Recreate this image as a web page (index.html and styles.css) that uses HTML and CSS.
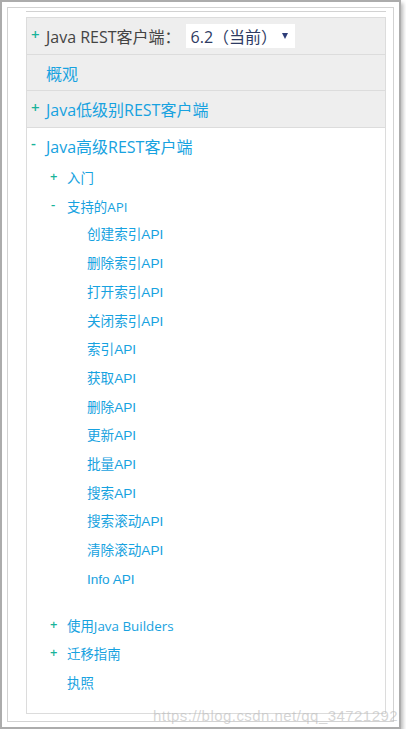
FILE: index.html
```html
<!DOCTYPE html>
<html lang="zh">
<head>
<meta charset="utf-8">
<title>Java REST客户端</title>
<link rel="stylesheet" href="styles.css">
</head>
<body>
<div class="shot">
  <div class="frame">
    <div class="inner-line">
      <div class="toc">
        <div class="row row-head">
          <span class="sign">+</span>
          <span class="head-title">Java REST客户端：</span>
          <span class="select"><span class="select-text">6.2（当前）</span><span class="caret"></span></span>
        </div>
        <div class="row row-link">
          <span class="sign"></span><a class="link">概观</a>
        </div>
        <div class="row row-link row-third">
          <span class="sign">+</span><a class="link">Java低级别REST客户端</a>
        </div>
        <div class="tree">
          <div class="l1"><span class="sign minus">-</span><a class="link">Java高级REST客户端</a></div>
          <ul class="l2-list">
            <li class="l2"><span class="sign2">+</span><a class="link">入门</a></li>
            <li class="l2"><span class="sign2 minus">-</span><a class="link">支持的API</a>
              <ul class="l3-list">
                <li><a class="link">创建索引API</a></li>
                <li><a class="link">删除索引API</a></li>
                <li><a class="link">打开索引API</a></li>
                <li><a class="link">关闭索引API</a></li>
                <li><a class="link">索引API</a></li>
                <li><a class="link">获取API</a></li>
                <li><a class="link">删除API</a></li>
                <li><a class="link">更新API</a></li>
                <li><a class="link">批量API</a></li>
                <li><a class="link">搜索API</a></li>
                <li><a class="link">搜索滚动API</a></li>
                <li><a class="link">清除滚动API</a></li>
                <li><a class="link">Info API</a></li>
              </ul>
            </li>
            <li class="l2"><span class="sign2">+</span><a class="link">使用Java Builders</a></li>
            <li class="l2"><span class="sign2">+</span><a class="link">迁移指南</a></li>
            <li class="l2"><span class="sign2"></span><a class="link">执照</a></li>
          </ul>
        </div>
      </div>
    </div>
  </div>
  <span class="watermark">https://blog.csdn.net/qq_34721292</span>
</div>
</body>
</html>
```
FILE: styles.css
```css
html, body {
  margin: 0;
  padding: 0;
  background: #ffffff;
}
body {
  font-family: "Open Sans", "Noto Sans CJK SC", sans-serif;
}
.shot {
  position: relative;
  box-sizing: border-box;
  width: 401px;
  height: 729px;
  border: 2px solid #acacac;
  padding: 5px;
  background: #fff;
  box-shadow: 2px 3px 4px rgba(0, 0, 0, 0.28);
}
.frame {
  box-sizing: border-box;
  height: 715px;
  border: 1px solid #d2d2d2;
  padding: 3px 7px 7px 18px;
  display: flex;
  flex-direction: column;
}
.inner-line {
  flex: 1;
  border-top: 1px solid #d2d2d2;
  padding-top: 5px;
  display: flex;
  flex-direction: column;
}
.toc {
  flex: 1;
  border: 1px solid #dcdcdc;
  display: flex;
  flex-direction: column;
}
.row {
  display: flex;
  align-items: center;
  background: #eeeeee;
  border-bottom: 1px solid #dcdcdc;
  padding-left: 4px;
  font-size: 16px;
}
.row-head { height: 36px; }
.row-link { height: 35px; }
.row-third { height: 36px; }
.sign {
  width: 15px;
  flex: none;
  color: #19b39a;
  font-size: 15px;
  font-weight: 600;
  position: relative;
  top: -2px;
}
.head-title {
  color: #444444;
}
.select {
  margin-left: 5px;
  height: 24px;
  width: 109px;
  box-sizing: border-box;
  background: #ffffff;
  display: flex;
  align-items: center;
  padding-left: 5px;
  position: relative;
}
.select-text {
  color: #2e3b63;
  font-size: 16px;
}
.caret {
  position: absolute;
  left: 96px;
  top: 9px;
  width: 0;
  height: 0;
  border-left: 3.5px solid transparent;
  border-right: 3.5px solid transparent;
  border-top: 6px solid #2d3d78;
}
.link {
  color: #17a2e0;
  text-decoration: none;
}
.tree {
  padding-top: 3px;
  padding-left: 4px;
}
.l1 {
  display: flex;
  align-items: center;
  height: 30px;
  font-size: 16px;
}
.sign.minus {
  top: -4px;
}
ul {
  list-style: none;
  margin: 0;
  padding: 0;
}
.l2-list {
  margin-top: 3px;
  padding-left: 19px;
  font-size: 13.4px;
}
.l2 {
  line-height: 28.7px;
}
.sign2 {
  display: inline-block;
  width: 17px;
  color: #19b39a;
  font-size: 13px;
  font-weight: 600;
  position: relative;
  top: -2px;
}
.sign2.minus { top: -3px; left: 1px; }
.l3-list {
  padding-left: 37px;
  margin-bottom: 17px;
  font-size: 13.6px;
  font-family: "Liberation Sans", "Noto Sans CJK SC", sans-serif;
}
.l3-list li {
  line-height: 28.7px;
}
.watermark {
  position: absolute;
  left: 151px;
  top: 705px;
  font-family: "Liberation Sans", sans-serif;
  font-size: 15px;
  color: rgba(185, 185, 185, 0.6);
  letter-spacing: 0.45px;
  white-space: nowrap;
}
```
